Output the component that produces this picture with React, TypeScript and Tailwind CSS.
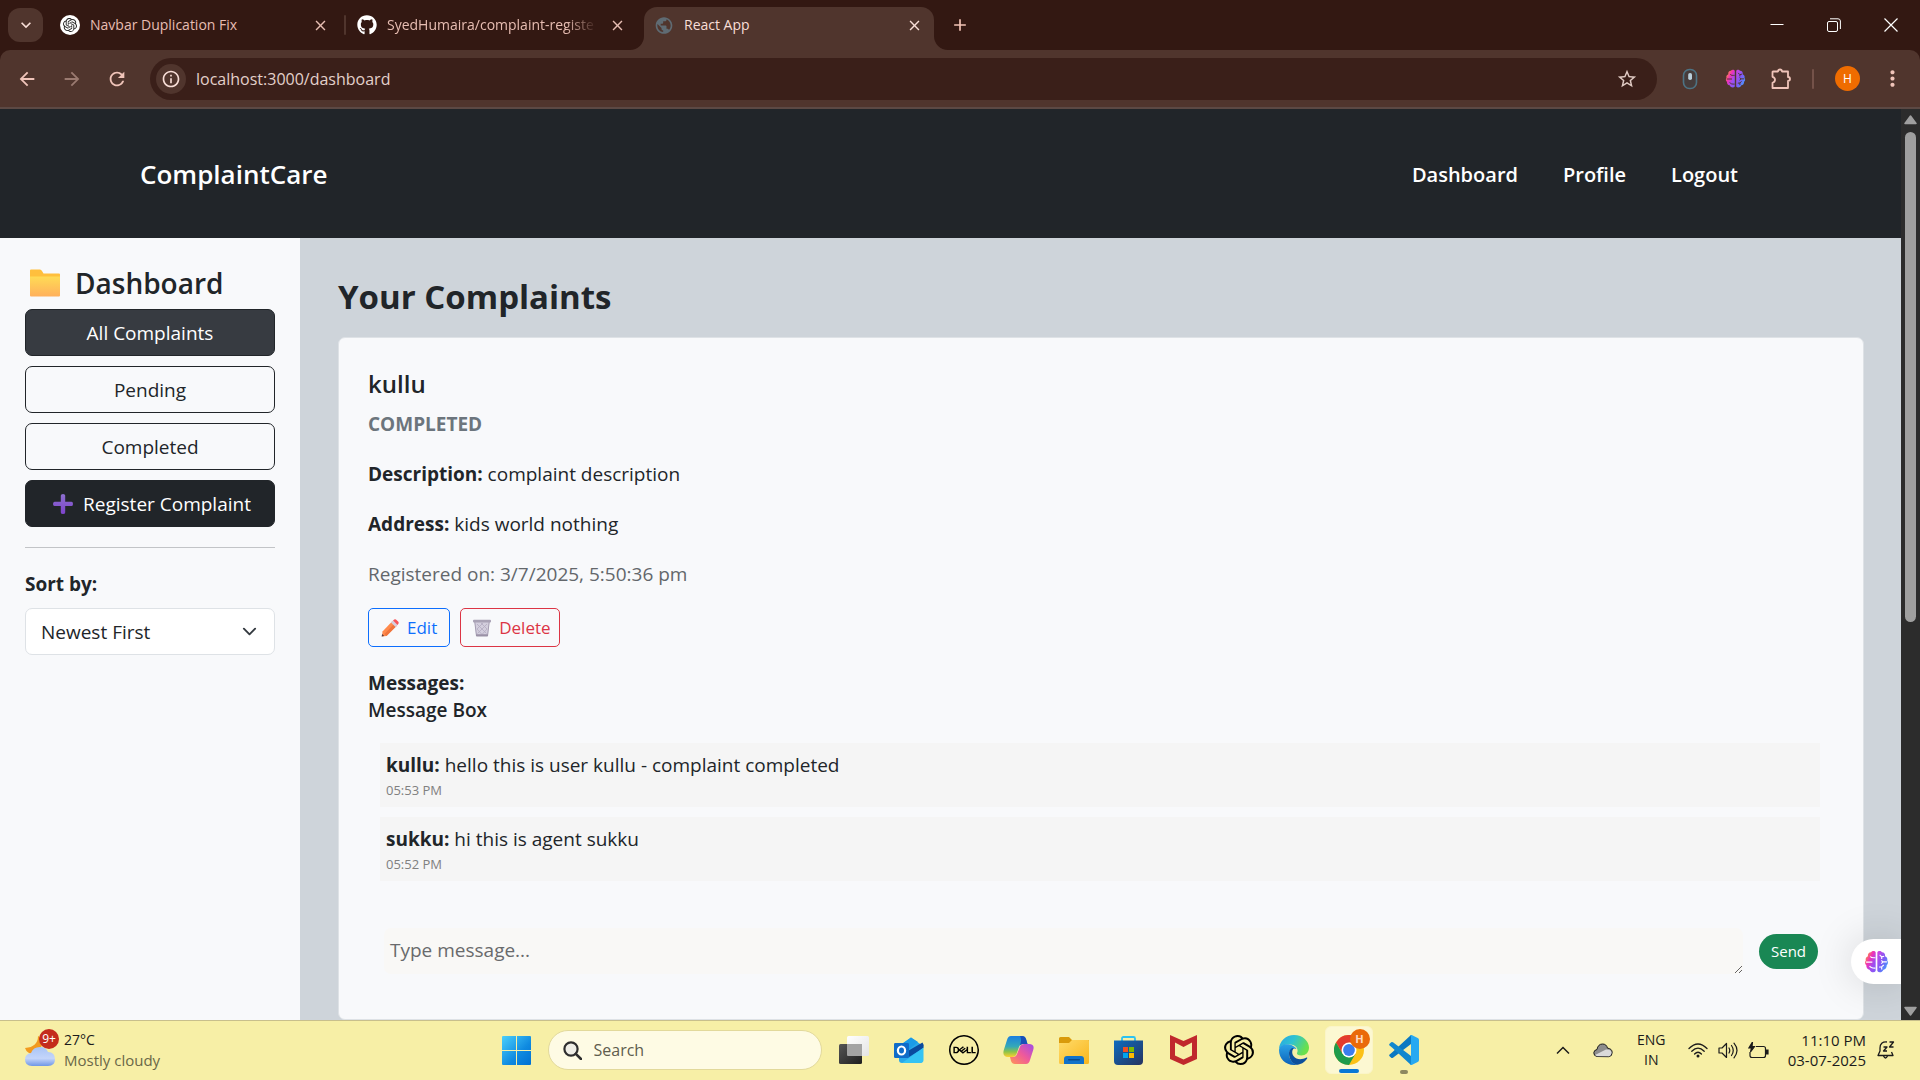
import type { ReactNode } from "react";
import { FaGithub } from "react-icons/fa";
import { SiDell, SiOpenai } from "react-icons/si";
import { MdStarOutline, MdRefresh, MdArrowBack, MdArrowForward, MdClose, MdAdd, MdPublic, MdMoreVert, MdInfoOutline, MdKeyboardArrowDown } from "react-icons/md";

const BRAIN_LOBE =
  "M11.2 3.2C10.6 1.7 8 1.2 6.7 3.2 4.6 3.2 3.3 5 3.8 7 1.9 7.8 1.2 9.6 1.7 11 .6 12.4.8 14.6 2.2 15.6 2 17.8 3.4 19.6 5.3 19.8 6.4 22.4 9.6 23.2 11.2 21.2Z";
const BRAIN_FOLDS = "M6 7.2C7 8.8 9 8.4 11 8.4M2 12.6H8M5.4 16.4C6.4 18.6 8.6 18.4 11 18.4";

function BrainIcon({ id, size, lines }: { id: string; size: number; lines: string }) {
  return (
    <svg width={size} height={size} viewBox="0 0 24 24" aria-hidden="true">
      <defs>
        <linearGradient id={id} x1="0" y1="0" x2="1" y2="1" gradientUnits="objectBoundingBox">
          <stop offset="0.1" stopColor="#ff9a2e" />
          <stop offset=".42" stopColor="#f031b8" />
          <stop offset=".7" stopColor="#a04df0" />
          <stop offset="1" stopColor="#7a5cf5" />
        </linearGradient>
        <linearGradient id={`${id}-r`} x1="0" y1="0" x2="1" y2="1">
          <stop offset="0" stopColor="#d63fe0" />
          <stop offset=".5" stopColor="#7d5cf6" />
          <stop offset="1" stopColor="#2fb4ff" />
        </linearGradient>
      </defs>
      <path d={BRAIN_LOBE} fill={`url(#${id})`} />
      <path d={BRAIN_FOLDS} fill="none" stroke={lines} strokeWidth="1.1" />
      <path d="M12.8 3.2C13.4 1.7 16 1.2 17.3 3.2 19.4 3.2 20.7 5 20.2 7 22.1 7.8 22.8 9.6 22.3 11 23.4 12.4 23.2 14.6 21.8 15.6 22 17.8 20.6 19.6 18.7 19.8 17.6 22.4 14.4 23.2 12.8 21.2Z" fill={`url(#${id}-r)`} />
      <path d="M15 5.6L17 7.6 19.4 7M17 7.6V9.6M22 12.4H18.4L16.6 14M18.4 12.4L16.6 11M14.6 17.4L17 17 19 15.4M17 17V19.6" fill="none" stroke={lines} strokeWidth="1.1" />
    </svg>
  );
}

function Tab({ icon, title, active, fade }: { icon: ReactNode; title: string; active?: boolean; fade?: boolean }) {
  return (
    <div
      className={
        active
          ? "relative mt-[7px] flex h-[43px] w-[290px] items-center gap-2.5 rounded-t-[13px] bg-[#50352d] pr-2.5 pb-[7px] pl-2.5 text-[#f8ded7]"
          : "flex h-[50px] w-[297px] items-center gap-2.5 pr-[17px] pl-2.5 text-[#e7bdb2]"
      }
    >
      {active && (
        <>
          <svg className="absolute bottom-0 -left-3.5" width="14" height="14" viewBox="0 0 14 14" aria-hidden="true">
            <path d="M14 0V14H0A14 14 0 0 0 14 0Z" fill="#50352d" />
          </svg>
          <svg className="absolute -right-3.5 bottom-0" width="14" height="14" viewBox="0 0 14 14" aria-hidden="true">
            <path d="M0 0V14H14A14 14 0 0 1 0 0Z" fill="#50352d" />
          </svg>
        </>
      )}
      <span className="flex size-5 shrink-0 items-center justify-center">{icon}</span>
      <span
        className={
          fade
            ? "min-w-0 flex-1 text-sm whitespace-nowrap [mask-image:linear-gradient(to_right,black_85%,transparent)]"
            : "min-w-0 flex-1 text-sm whitespace-nowrap"
        }
      >
        {title}
      </span>
      <button type="button" aria-label={`Close ${title}`} className="flex size-5 shrink-0 items-center justify-center">
        <MdClose size={17} />
      </button>
    </div>
  );
}

function BrowserChrome() {
  return (
    <div className="shrink-0 bg-[#331812]">
      <div className="flex h-[50px] items-center justify-between">
        <div className="flex h-full items-center">
          <button type="button" aria-label="Search tabs" className="ml-2 flex h-[34px] w-[35px] items-center justify-center rounded-xl bg-[#50352d] text-[#f8ded7]">
            <MdKeyboardArrowDown size={20} />
          </button>
          <div className="flex h-full pl-[7px]">
            <Tab
              icon={
                <span className="flex size-5 items-center justify-center rounded-full bg-white text-[#222]">
                  <SiOpenai size={14} />
                </span>
              }
              title="Navbar Duplication Fix"
            />
            <div className="relative flex items-center">
              <span className="absolute top-[15px] -left-[3px] h-5 w-0.5 rounded bg-[#50352d]" />
              <Tab icon={<FaGithub size={20} className="text-white" />} title="SyedHumaira/complaint-registe" fade />
            </div>
            <Tab icon={<MdPublic size={21} className="text-[#5f6b73]" />} title="React App" active />
          </div>
          <button type="button" aria-label="New tab" className="ml-4 flex size-5 items-center justify-center text-[#f3c3b6]">
            <MdAdd size={20} />
          </button>
        </div>
        <div className="flex items-center gap-[37px] pr-[19px] text-white">
          <button type="button" aria-label="Minimize" className="flex size-5 items-center justify-center">
            <svg width="14" height="14" viewBox="0 0 14 14" aria-hidden="true"><path d="M.5 6.5H13.5" stroke="currentColor" /></svg>
          </button>
          <button type="button" aria-label="Restore" className="flex size-5 items-center justify-center">
            <svg width="14" height="14" viewBox="0 0 14 14" fill="none" stroke="currentColor" aria-hidden="true">
              <rect x=".5" y="3.5" width="10" height="10" rx="1.5" />
              <path d="M3 .8H11A2.4 2.4 0 0 1 13.4 3V11" />
            </svg>
          </button>
          <button type="button" aria-label="Close window" className="flex size-5 items-center justify-center">
            <svg width="14" height="14" viewBox="0 0 14 14" aria-hidden="true"><path d="M.5 .5L13.5 13.5M13.5 .5L.5 13.5" stroke="currentColor" strokeWidth="1.2" /></svg>
          </button>
        </div>
      </div>

      <div className="flex h-[59px] items-center rounded-t-[10px] border-b-2 border-[#5c4944] bg-[#50352d] pl-4 text-[#f0c4b9]">
        <div className="flex items-center gap-[23px]">
          <button type="button" aria-label="Back" className="size-[22px]"><MdArrowBack size={22} /></button>
          <button type="button" aria-label="Forward" className="size-[22px] text-[#9a7a70]"><MdArrowForward size={22} /></button>
          <button type="button" aria-label="Reload" className="size-[22px]"><MdRefresh size={22} /></button>
        </div>
        <div className="ml-[22px] flex h-[42px] flex-1 items-center rounded-full bg-[#3a1f19] pr-[19px] pl-1.5">
          <button type="button" aria-label="Site information" className="flex size-[30px] items-center justify-center rounded-full bg-[#50352d] text-[#f8ded7]">
            <MdInfoOutline size={20} />
          </button>
          <input aria-label="Address" defaultValue="localhost:3000/dashboard" className="ml-2.5 min-w-0 flex-1 bg-transparent text-base text-[#e3d0ca] outline-none" />
          <button type="button" aria-label="Bookmark this page" className="text-[#e0cbc4]"><MdStarOutline size={22} /></button>
        </div>
        <div className="flex items-center pr-[15px] pl-[22px]">
          <button type="button" aria-label="Scroll extension" className="flex w-[22px] justify-center">
            <svg width="16" height="22" viewBox="0 0 16 22" aria-hidden="true">
              <rect x="1.5" y="1.5" width="13" height="19" rx="6" fill="#463c3b" stroke="#4d7384" strokeWidth="1.6" />
              <rect x="6.2" y="5" width="3.8" height="7" rx="1.8" fill="#b9cfdb" />
            </svg>
          </button>
          <button type="button" aria-label="AI assistant" className="ml-[23px] flex w-[22px] justify-center"><BrainIcon id="brain-bar" size={21} lines="#50352d" /></button>
          <button type="button" aria-label="Extensions" className="ml-6 flex w-[22px] justify-center">
            <svg width="22" height="22" viewBox="0 0 22 22" fill="none" stroke="currentColor" strokeWidth="1.8" strokeLinejoin="round" aria-hidden="true">
              <path d="M3 3.5H8Q8.200 1.500 10 1.500T12 3.500H18V9Q20 9.200 20 11T18 13V20H2.500V14.800Q5 14 5 11.800T2.500 8.800V4Z" />
            </svg>
          </button>
          <span className="ml-5 h-5 w-0.5 rounded bg-[#745249]" />
          <button type="button" aria-label="Account" className="ml-[21px] flex size-[25px] items-center justify-center rounded-full bg-[#ef6c00] text-xs font-medium text-white">H</button>
          <button type="button" aria-label="Browser menu" className="ml-5"><MdMoreVert size={25} /></button>
        </div>
      </div>
    </div>
  );
}

function FolderEmoji() {
  return (
    <svg width="40" height="30" viewBox="0 0 40 30" aria-hidden="true">
      <defs>
        <linearGradient id="folder-front" x1="0" y1="0" x2="0" y2="1">
          <stop offset="0" stopColor="#ffdb55" />
          <stop offset="1" stopColor="#ffb05c" />
        </linearGradient>
      </defs>
      <path d="M5 2.500Q5 1.500 6 1.500H15Q16.200 1.500 17 3L18.500 5.500H34Q35 5.500 35 6.500V12H5Z" fill="#ffbf3d" />
      <path d="M5 8.500H35V27.500Q35 28.500 34 28.500H6Q5 28.500 5 27.500Z" fill="url(#folder-front)" />
    </svg>
  );
}

function PlusEmoji() {
  return (
    <svg width="20" height="20" viewBox="0 0 20 20" aria-hidden="true">
      <defs>
        <linearGradient id="plus-fill" x1="0" y1="0" x2="0" y2="1">
          <stop offset="0" stopColor="#8d70cf" />
          <stop offset="1" stopColor="#7d43cb" />
        </linearGradient>
      </defs>
      <path d="M7.800 1.500Q7.800 0 10 0T12.200 1.500V7.800H18.500Q20 7.800 20 10T18.500 12H12.200V18.500Q12.200 20 10 20T7.800 18.500V12H1.500Q0 12 0 10T1.500 7.800H7.800Z" fill="url(#plus-fill)" />
    </svg>
  );
}

function PencilEmoji() {
  return (
    <svg width="18" height="18" viewBox="0 0 18 18" aria-hidden="true">
      <path d="M11.500 2L16 6.500 5.500 17 1 17.500 1.500 12.500Z" fill="#ff8a4c" />
      <path d="M13.500 4.500L3.500 15 5.500 17 16 6.500Z" fill="#f0743c" />
      <path d="M10 3.500L12 1.500 16.500 6 14.500 8Z" fill="#d5cfe0" />
      <path d="M12 1.500L13.200 .6Q14.500 -.1 15.500 .9L17.100 2.500Q18.100 3.500 17.400 4.800L16.500 6Z" fill="#f8555a" />
      <path d="M.6 17.600L1.200 15 3.200 17Z" fill="#5a3a3a" />
    </svg>
  );
}

function TrashEmoji() {
  return (
    <svg width="18" height="18" viewBox="0 0 18 18" aria-hidden="true">
      <path d="M1.500 2.500H16.500L14.800 17H3.200Z" fill="#d3cedd" />
      <path d="M4 5L13.500 14.500M4 10L9 15.500M8 4L14 10M14 5L4.500 14.500M14 10L9 15.500M10 4L4 10" stroke="#b3abc0" strokeWidth=".8" />
      <path d="M1.800 3L3.500 17M16.200 3L14.500 17" stroke="#a59db2" />
      <rect x="0" y=".8" width="18" height="2.600" rx="1" fill="#a9a2b5" />
      <rect x="3" y="15.200" width="12" height="2.300" rx=".8" fill="#9a91a6" />
    </svg>
  );
}

const FILTER = "flex h-[47px] w-full items-center justify-center rounded-[7px] border border-[#212529] pt-px text-[19px]";

function Sidebar() {
  return (
    <aside className="w-[300px] shrink-0 bg-[#f8f9fb] px-[25px] pt-[27px]">
      <h4 className="mb-2 flex h-9 items-center gap-2.5 text-[28px] leading-8 font-semibold">
        <FolderEmoji />
        Dashboard
      </h4>
      <div className="flex flex-col gap-2.5">
        <button type="button" className={`${FILTER} bg-[#373b41] text-white`}>All Complaints</button>
        <button type="button" className={FILTER}>Pending</button>
        <button type="button" className={FILTER}>Completed</button>
        <button type="button" className={`${FILTER} gap-2.5 bg-[#212529] pl-1 text-white`}>
          <PlusEmoji />
          Register Complaint
        </button>
      </div>
      <hr className="mt-5 mb-[21px] border-[#c2c4c7]" />
      <label htmlFor="sort" className="mb-[9px] block h-[30px] text-[19px] leading-[30px] font-bold">Sort by:</label>
      <div className="relative">
        <select id="sort" className="h-[47px] w-full appearance-none rounded-[7px] border border-[#dee2e6] bg-white px-[15px] pt-px text-[19px]">
          <option>Newest First</option>
          <option>Oldest First</option>
        </select>
        <svg className="pointer-events-none absolute top-4 right-[18px]" width="15" height="15" viewBox="0 0 16 16" fill="none" stroke="#343a40" strokeWidth="2" strokeLinecap="round" strokeLinejoin="round" aria-hidden="true">
          <path d="m2 5 6 6 6-6" />
        </svg>
      </div>
    </aside>
  );
}

const MESSAGES = [
  { from: "kullu", text: "hello this is user kullu - complaint completed", time: "05:53 PM" },
  { from: "sukku", text: "hi this is agent sukku", time: "05:52 PM" },
];

function ComplaintCard() {
  return (
    <article className="flex-1 rounded-[7px] border border-[#dee2e6] bg-[#f8f9fb] pt-[31px] pr-[31px] pl-[29px] text-[19px] leading-[30px]">
      <h5 className="text-2xl leading-[30px] font-semibold">kullu</h5>
      <h6 className="mt-2.5 leading-[30px] font-bold text-[#6c757d]">COMPLETED</h6>
      <p className="mt-5"><strong>Description:</strong> complaint description</p>
      <p className="mt-5"><strong>Address:</strong> kids world nothing</p>
      <p className="mt-5 text-[#63676b]">Registered on: 3/7/2025, 5:50:36 pm</p>
      <div className="mt-[19px] flex gap-2.5">
        <button type="button" className="flex h-[39px] items-center gap-2 rounded-[5px] border border-[#0d6efd] px-3 text-[17px] text-[#0d6efd]"><PencilEmoji />Edit</button>
        <button type="button" className="flex h-[39px] items-center gap-2 rounded-[5px] border border-[#dc3545] pr-2 pl-3 text-[17px] text-[#dc3545]"><TrashEmoji />Delete</button>
      </div>
      <p className="mt-[21px] font-bold">Messages:</p>
      <h6 className="leading-6 font-semibold">Message Box</h6>
      <div className="mt-[21px] mr-3 ml-3 flex flex-col gap-2.5">
        {MESSAGES.map((m) => (
          <div key={m.from} className="h-16 bg-[#f5f5f5] px-1.5 pt-[7px]">
            <p className="leading-[30px]"><strong>{m.from}:</strong> {m.text}</p>
            <p className="text-[13px] leading-5 text-[#808080]">{m.time}</p>
          </div>
        ))}
      </div>
      <form className="mt-[47px] mr-3.5 ml-4 flex items-center gap-4" onSubmit={(e) => e.preventDefault()}>
        <textarea aria-label="Message" rows={1} placeholder="Type message..." className="h-[46px] min-w-0 flex-1 resize rounded-[7px] bg-[#f9f8f6] px-1.5 py-[7px] placeholder:text-[#696a6c]" />
        <button type="submit" className="h-[35px] w-[59px] rounded-full bg-[#198754] text-[15px] leading-none text-white">Send</button>
      </form>
    </article>
  );
}

function ScrollBar() {
  return (
    <div className="flex w-[19px] shrink-0 flex-col items-center bg-[#2c2c2c] pt-1.5 pb-1">
      <svg width="13" height="10" viewBox="0 0 13 10" className="shrink-0" aria-hidden="true"><path d="M6.500 1L12 8.500H1Z" fill="#9f9f9f" stroke="#9f9f9f" strokeLinejoin="round" strokeWidth="1.500" /></svg>
      <div className="mt-[7px] w-[11px] flex-[488] rounded-full bg-[#9f9f9f]" />
      <div className="flex-[382]" />
      <svg width="13" height="10" viewBox="0 0 13 10" className="shrink-0" aria-hidden="true"><path d="M6.500 9L12 1.500H1Z" fill="#9f9f9f" stroke="#9f9f9f" strokeLinejoin="round" strokeWidth="1.500" /></svg>
    </div>
  );
}

function WindowsLogo() {
  return (
    <svg width="29" height="29" viewBox="0 0 29 29" aria-hidden="true">
      <defs>
        <linearGradient id="win" x1="0" y1="0" x2="1" y2="1">
          <stop offset="0" stopColor="#4cd0fb" />
          <stop offset=".6" stopColor="#0f8ae0" />
          <stop offset="1" stopColor="#0070d2" />
        </linearGradient>
      </defs>
      <path d="M1 0H14V14H0V1Q0 0 1 0ZM15 0H28Q29 0 29 1V14H15ZM0 15H14V29H1Q0 29 0 28ZM15 15H29V28Q29 29 28 29H15Z" fill="url(#win)" />
    </svg>
  );
}

function TaskViewIcon() {
  return (
    <svg width="30" height="28" viewBox="0 0 30 28" aria-hidden="true">
      <defs>
        <linearGradient id="tv-a" x1="0" y1="0" x2="1" y2="1"><stop offset="0" stopColor="#555" /><stop offset="1" stopColor="#1f1f1f" /></linearGradient>
        <linearGradient id="tv-b" x1="0" y1="0" x2="1" y2="1"><stop offset="0" stopColor="#fff" /><stop offset="1" stopColor="#e4e4e4" /></linearGradient>
      </defs>
      <rect x="8" y="0" width="22" height="20" rx="1.500" fill="url(#tv-b)" />
      <rect x="0" y="8" width="23" height="20" rx="1.500" fill="url(#tv-a)" />
      <path d="M8 8H22Q23 8 23 9V20H9Q8 20 8 19Z" fill="#a3a3a3" />
    </svg>
  );
}

function OutlookIcon() {
  return (
    <svg width="30" height="27" viewBox="0 0 30 27" aria-hidden="true">
      <path d="M5 9L17 .5 29 9V22Q29 26 26 26H8Q5 26 5 23Z" fill="#28a8ea" />
      <path d="M5 9L17 .5 24 5 12 15Z" fill="#1b9be8" />
      <path d="M13 14.500L28.500 5.500Q30 7 29.500 11L15 20Z" fill="#0a4a9e" />
      <path d="M8 26L29.500 10.500V23Q29.500 26 26 26Z" fill="#35c3f3" />
      <rect x="0" y="6" width="15" height="15" rx="1.200" fill="#0f6cc9" />
      <ellipse cx="7.500" cy="13.500" rx="3.600" ry="4" fill="none" stroke="#fff" strokeWidth="2.200" />
    </svg>
  );
}

function CopilotIcon() {
  return (
    <svg width="31" height="28" viewBox="0 0 31 28" aria-hidden="true">
      <defs>
        <linearGradient id="cp-l" x1="0" y1="0" x2="0" y2="1"><stop offset="0" stopColor="#1b7fe0" /><stop offset=".5" stopColor="#34a9b8" /><stop offset=".75" stopColor="#8bc34a" /><stop offset="1" stopColor="#ffd02e" /></linearGradient>
        <linearGradient id="cp-r" x1="1" y1="0" x2="0" y2="1"><stop offset="0" stopColor="#a04be8" /><stop offset=".5" stopColor="#ef5a9a" /><stop offset="1" stopColor="#ff9556" /></linearGradient>
      </defs>
      <path d="M8 0H19Q22 0 23 3L24.500 8H20Q17 8 16 11L13.500 18Q12.500 21 9 21H5Q-1 21 .8 14L4 4Q5 0 8 0Z" fill="url(#cp-l)" />
      <path d="M17 0H19Q22 0 23 3L24.500 8H20Q18 8 17 9.500Q19 3 17 0Z" fill="#184fb8" />
      <path d="M23 28H12Q9 28 8 25L7 21H10Q13 21 14 18L17 10.500Q18 8 21 8H26Q32 8 30.200 14L27 24Q26 28 23 28Z" fill="url(#cp-r)" />
    </svg>
  );
}

function ExplorerIcon() {
  return (
    <svg width="30" height="27" viewBox="0 0 30 27" aria-hidden="true">
      <defs><linearGradient id="ex" x1="0" y1="0" x2="1" y2="1"><stop offset="0" stopColor="#ffdb6a" /><stop offset="1" stopColor="#f9b61c" /></linearGradient></defs>
      <path d="M0 1.500Q0 0 1.500 0H10L13 3H29Q30 3 30 4V10H0Z" fill="#d99a0b" />
      <path d="M0 6H10L13 3H29Q30 3 30 4.500V25.500Q30 27 28.500 27H1.500Q0 27 0 25.500Z" fill="url(#ex)" />
      <path d="M5 27V22Q5 19 8 19H22Q25 19 25 22V27Z" fill="#1272c9" />
      <rect x="9" y="22" width="12" height="1.500" rx=".7" fill="#0a4a8d" />
    </svg>
  );
}

function StoreIcon() {
  return (
    <svg width="29" height="29" viewBox="0 0 29 29" aria-hidden="true">
      <defs><linearGradient id="st" x1="0" y1="0" x2="1" y2="1"><stop offset="0" stopColor="#0f6cbf" /><stop offset="1" stopColor="#26335f" /></linearGradient></defs>
      <path d="M8 5V2.500Q8 1 9.500 1H19.500Q21 1 21 2.500V5" fill="none" stroke="#2cc2f0" strokeWidth="1.800" />
      <path d="M0 4.500H29V25Q29 29 25 29H4Q0 29 0 25Z" fill="url(#st)" />
      <path d="M9 11H14V16H9Z" fill="#f25022" />
      <path d="M15 11H20V16H15Z" fill="#7fba00" />
      <path d="M9 17H14V22H9Z" fill="#00a4ef" />
      <path d="M15 17H20V22H15Z" fill="#ffb900" />
    </svg>
  );
}

function McAfeeIcon() {
  return (
    <svg width="27" height="30" viewBox="0 0 27 30" aria-hidden="true">
      <path d="M0 0L13.500 6 27 0V24L13.500 30 0 24Z" fill="#c0282d" />
      <path d="M5 7.500L13.500 12 22 7.500V20.500L13.500 24.500 5 20.500Z" fill="#f7efa6" />
    </svg>
  );
}

function EdgeIcon() {
  return (
    <svg width="30" height="30" viewBox="0 0 30 30" aria-hidden="true">
      <defs>
        <linearGradient id="ed-a" x1="0" y1="0" x2="1" y2=".4"><stop offset="0" stopColor="#27a5e6" /><stop offset=".5" stopColor="#2fc3d0" /><stop offset="1" stopColor="#6ae04c" /></linearGradient>
        <linearGradient id="ed-b" x1="0" y1="0" x2="0" y2="1"><stop offset="0" stopColor="#2aa3e8" /><stop offset="1" stopColor="#0d62b8" /></linearGradient>
      </defs>
      <path d="M0 14C.5 6 7 0 15 0 24 0 30 6.500 30 12.500 30 17.500 26.500 20.500 22.500 20.500 19 20.500 17.500 19 18 18 19.500 16 18.500 11 13 9.800 7 8.500 1.500 11 0 14Z" fill="url(#ed-a)" />
      <path d="M0 15C.5 10 6 8.500 10.500 9.500 14 10.300 17 12.500 17.500 14 13 12 10 15.500 10 19 10 24 14 29 18 29.700 8 31.500 0 24.500 0 15Z" fill="url(#ed-b)" />
      <path d="M10 18.500C10 14.500 13 12.500 15 13 13 15 12.500 18 14.500 21 17.500 25 23 24.800 27.500 22.500 28.300 22.200 28.500 23 28 23.800 25.500 27.500 21.500 29.800 17.500 29.800 12.500 28.500 10 23 10 18.500Z" fill="#0c4f9c" />
    </svg>
  );
}

function ChromeIcon() {
  return (
    <svg width="30" height="30" viewBox="0 0 30 30" aria-hidden="true">
      <circle cx="15" cy="15" r="15" fill="#fbc116" />
      <path d="M2 7.500A15 15 0 0 1 28 7.500H15L8.500 18.800Z" fill="#e33b2e" />
      <path d="M2 7.500A15 15 0 0 0 15 30L21.500 18.800 15 22.500 8.500 18.800Z" fill="#1f9b4b" />
      <circle cx="15" cy="15" r="7.500" fill="#fff" />
      <circle cx="15" cy="15" r="5.900" fill="#3b7ded" />
    </svg>
  );
}

function VsCodeIcon() {
  return (
    <svg width="30" height="30" viewBox="0 0 30 30" aria-hidden="true">
      <path d="M22 0L3 17.500 .6 19.500Q-.3 20.300.6 21.300L2.200 22.800Q3 23.400 4 22.700L22 9Z" fill="#0a78c2" />
      <path d="M22 30L3 12.500 .6 10.500Q-.3 9.700.6 8.700L2.200 7.200Q3 6.600 4 7.300L22 21Z" fill="#1187cf" />
      <path d="M21 .3Q21.700-.3 22.700.1L28.700 3Q30 3.600 30 5V25Q30 26.400 28.700 27L22.700 29.900Q21.700 30.300 21 29.700 22 29.500 22 28V2Q22 .6 21 .3Z" fill="#27a9f1" />
    </svg>
  );
}

const APPS: { name: string; icon: ReactNode }[] = [
  { name: "Task view", icon: <TaskViewIcon /> },
  { name: "Outlook", icon: <OutlookIcon /> },
  { name: "Dell", icon: <SiDell size={30} className="text-black" /> },
  { name: "Copilot", icon: <CopilotIcon /> },
  { name: "File Explorer", icon: <ExplorerIcon /> },
  { name: "Microsoft Store", icon: <StoreIcon /> },
  { name: "McAfee", icon: <McAfeeIcon /> },
  { name: "ChatGPT", icon: <SiOpenai size={30} className="text-black" /> },
  { name: "Edge", icon: <EdgeIcon /> },
];

function TaskBar() {
  return (
    <footer className="grid h-[60px] shrink-0 grid-cols-[1fr_auto_1fr] items-center border-t border-[#c8bf8c] bg-[#f7efa6] pb-px text-[#1b1b1b]">
      <button type="button" className="flex items-center gap-2 justify-self-start pl-6 text-left">
        <span className="relative">
          <svg width="32" height="38" viewBox="0 0 32 38" aria-hidden="true">
            <defs><linearGradient id="cloud" x1="0" y1="0" x2="0" y2="1"><stop offset="0" stopColor="#a9c4f5" /><stop offset=".6" stopColor="#c4d5fa" /><stop offset="1" stopColor="#6f97e6" /></linearGradient></defs>
            <path d="M14 5Q14 16 1 17 3 23 10 23 18 22 18 10 17 6 14 5Z" fill="#f29a1f" />
            <path d="M8 35Q1 35 1 28.500 1 23 7 22 9 16 16 16 22 16 24 21 31 21 31 28.500 31 35 24 35Z" fill="url(#cloud)" />
          </svg>
          <span className="absolute -top-0.5 left-[15px] flex size-5 items-center justify-center rounded-full bg-[#c42b1c] text-xs text-white">9+</span>
        </span>
        <span className="leading-5">
          <span className="block text-sm leading-5">27°C</span>
          <span className="block text-[15px] leading-5 text-[#6a6748]">Mostly cloudy</span>
        </span>
      </button>

      <div className="flex items-center gap-[7px]">
        <button type="button" aria-label="Start" className="flex size-12 items-center justify-center"><WindowsLogo /></button>
        <label className="mr-px flex h-10 w-[274px] items-center gap-3 rounded-full border border-[#e2d99b] bg-[#fefbe4] px-3.5">
          <svg width="19" height="19" viewBox="0 0 19 19" fill="none" stroke="#2e2e2e" strokeWidth="2.200" aria-hidden="true"><circle cx="8" cy="8" r="6.600" fill="#efeee6" /><path d="M12.800 12.800L18 18" strokeLinecap="round" strokeWidth="2.600" /></svg>
          <input aria-label="Search" placeholder="Search" className="min-w-0 flex-1 bg-transparent text-base outline-none placeholder:text-[#5f5d4e]" />
        </label>
        {APPS.map((a) => (
          <button key={a.name} type="button" aria-label={a.name} className="flex size-12 items-center justify-center">{a.icon}</button>
        ))}
        <button type="button" aria-label="Chrome" className="relative flex size-12 items-center justify-center rounded-md border border-[#fbf5c8] bg-[#fcf8d2]">
          <ChromeIcon />
          <span className="absolute top-[2px] right-[2px] flex size-5 items-center justify-center rounded-full bg-[#ea6a0a] text-[11px] font-bold text-[#ffd9c0]">H</span>
          <span className="absolute bottom-0 h-1 w-5 rounded-full bg-[#0a78d6]" />
        </button>
        <button type="button" aria-label="Visual Studio Code" className="relative flex size-12 items-center justify-center">
          <VsCodeIcon />
          <span className="absolute bottom-0 h-1 w-2 rounded-full bg-[#8d8860]" />
        </button>
      </div>

      <div className="flex items-center justify-self-end pr-[25px]">
        <svg width="14" height="9" viewBox="0 0 14 9" fill="none" stroke="#1b1b1b" strokeWidth="1.500" aria-hidden="true"><path d="M1 7.500L7 1.500 13 7.500" /></svg>
        <svg className="ml-[23px]" width="20" height="15" viewBox="0 0 20 15" aria-hidden="true">
          <path d="M4 13.500Q.7 13 .8 9.800 1 7 4 6.500 5 1 9.500 1 13.500 1 14.500 5.200 19 5.500 19.200 9.500 19.200 13.500 15.500 13.700Z" fill="#8d8d8d" stroke="#1b1b1b" />
          <path d="M2 12L13 6.500Q18.500 6 18.500 10 18 13 15.500 13.200H4Z" fill="#dadada" />
        </svg>
        <div className="ml-6 w-[29px] text-center text-sm leading-5">
          <div>ENG</div>
          <div>IN</div>
        </div>
        <svg className="ml-[22px]" width="20" height="15" viewBox="0 0 20 15" fill="none" stroke="#1b1b1b" strokeWidth="1.300" strokeLinecap="round" aria-hidden="true">
          <path d="M1 5.500Q10-3.500 19 5.500M3.800 8.300Q10 2 16.200 8.300M6.600 11Q10 7.500 13.400 11" />
          <circle cx="10" cy="13" r="1.500" fill="#1b1b1b" stroke="none" />
        </svg>
        <svg className="ml-2.5" width="20" height="17" viewBox="0 0 20 17" fill="none" stroke="#1b1b1b" strokeWidth="1.200" strokeLinecap="round" strokeLinejoin="round" aria-hidden="true">
          <path d="M1 6H4L8.500 1.500V15.500L4 11H1ZM11 6Q12.500 8.500 11 11M13.500 3.500Q17 8.500 13.500 13.500M16 1.200Q22 8.500 16 15.800" />
        </svg>
        <svg className="ml-2.5" width="21" height="17" viewBox="0 0 21 17" fill="none" stroke="#1b1b1b" strokeWidth="1.200" aria-hidden="true">
          <path d="M8 4.500H15.500Q17.500 4.500 17.500 6.500V13.500Q17.500 15.500 15.500 15.500H4Q2 15.500 2 13.500V10" />
          <path d="M4.500 0L.8 6H3.500L2.500 10 6.500 4.500H4Z" fill="#1b1b1b" />
          <path d="M18 8H20V12H18Z" fill="#1b1b1b" />
        </svg>
        <div className="ml-[19px] text-right text-[15px] leading-5">
          <div>11:10 PM</div>
          <div>03-07-2025</div>
        </div>
        <svg className="ml-[11px]" width="18" height="20" viewBox="0 0 18 20" fill="none" stroke="#1b1b1b" strokeWidth="1.300" strokeLinejoin="round" aria-hidden="true">
          <path d="M10 2Q3 1.500 3 8V11L1 15.500H16L14.500 12M6.500 16Q8.500 20 10.500 16M6.500 7H10L6.500 11H10M12.500 2H16.500L12.500 7H16.500" />
        </svg>
      </div>
    </footer>
  );
}

export default function App() {
  return (
    <div className="flex h-screen flex-col overflow-hidden font-['Open_Sans','Noto_Sans',sans-serif] text-[#212529]">
      <BrowserChrome />
      <div className="flex min-h-0 flex-1">
        <div className="relative flex min-w-0 flex-1 flex-col overflow-hidden">
          <header className="flex h-[129px] shrink-0 items-center justify-between bg-[#212529] px-[140px] pt-0.5 text-white">
            <a href="#home" className="text-[26px] font-semibold">ComplaintCare</a>
            <nav className="flex gap-[45px] pr-[23px] text-xl font-semibold">
              <a href="#dashboard">Dashboard</a>
              <a href="#profile">Profile</a>
              <a href="#logout">Logout</a>
            </nav>
          </header>
          <div className="flex min-h-0 flex-1">
            <Sidebar />
            <main className="flex min-w-0 flex-1 flex-col bg-[#ced4da] pt-[38px] pr-[37px] pl-[38px]">
              <h2 className="mb-[19px] h-[42px] text-[33px] leading-[42px] font-bold">Your Complaints</h2>
              <ComplaintCard />
            </main>
          </div>
          <button type="button" aria-label="Open AI assistant" className="absolute right-0 bottom-9 flex h-[45px] w-[50px] items-center justify-center rounded-l-full bg-white shadow-[0_0_40px_rgba(0,0,0,0.15)]">
            <BrainIcon id="brain-float" size={25} lines="#ffffff" />
          </button>
        </div>
        <ScrollBar />
      </div>
      <TaskBar />
    </div>
  );
}
